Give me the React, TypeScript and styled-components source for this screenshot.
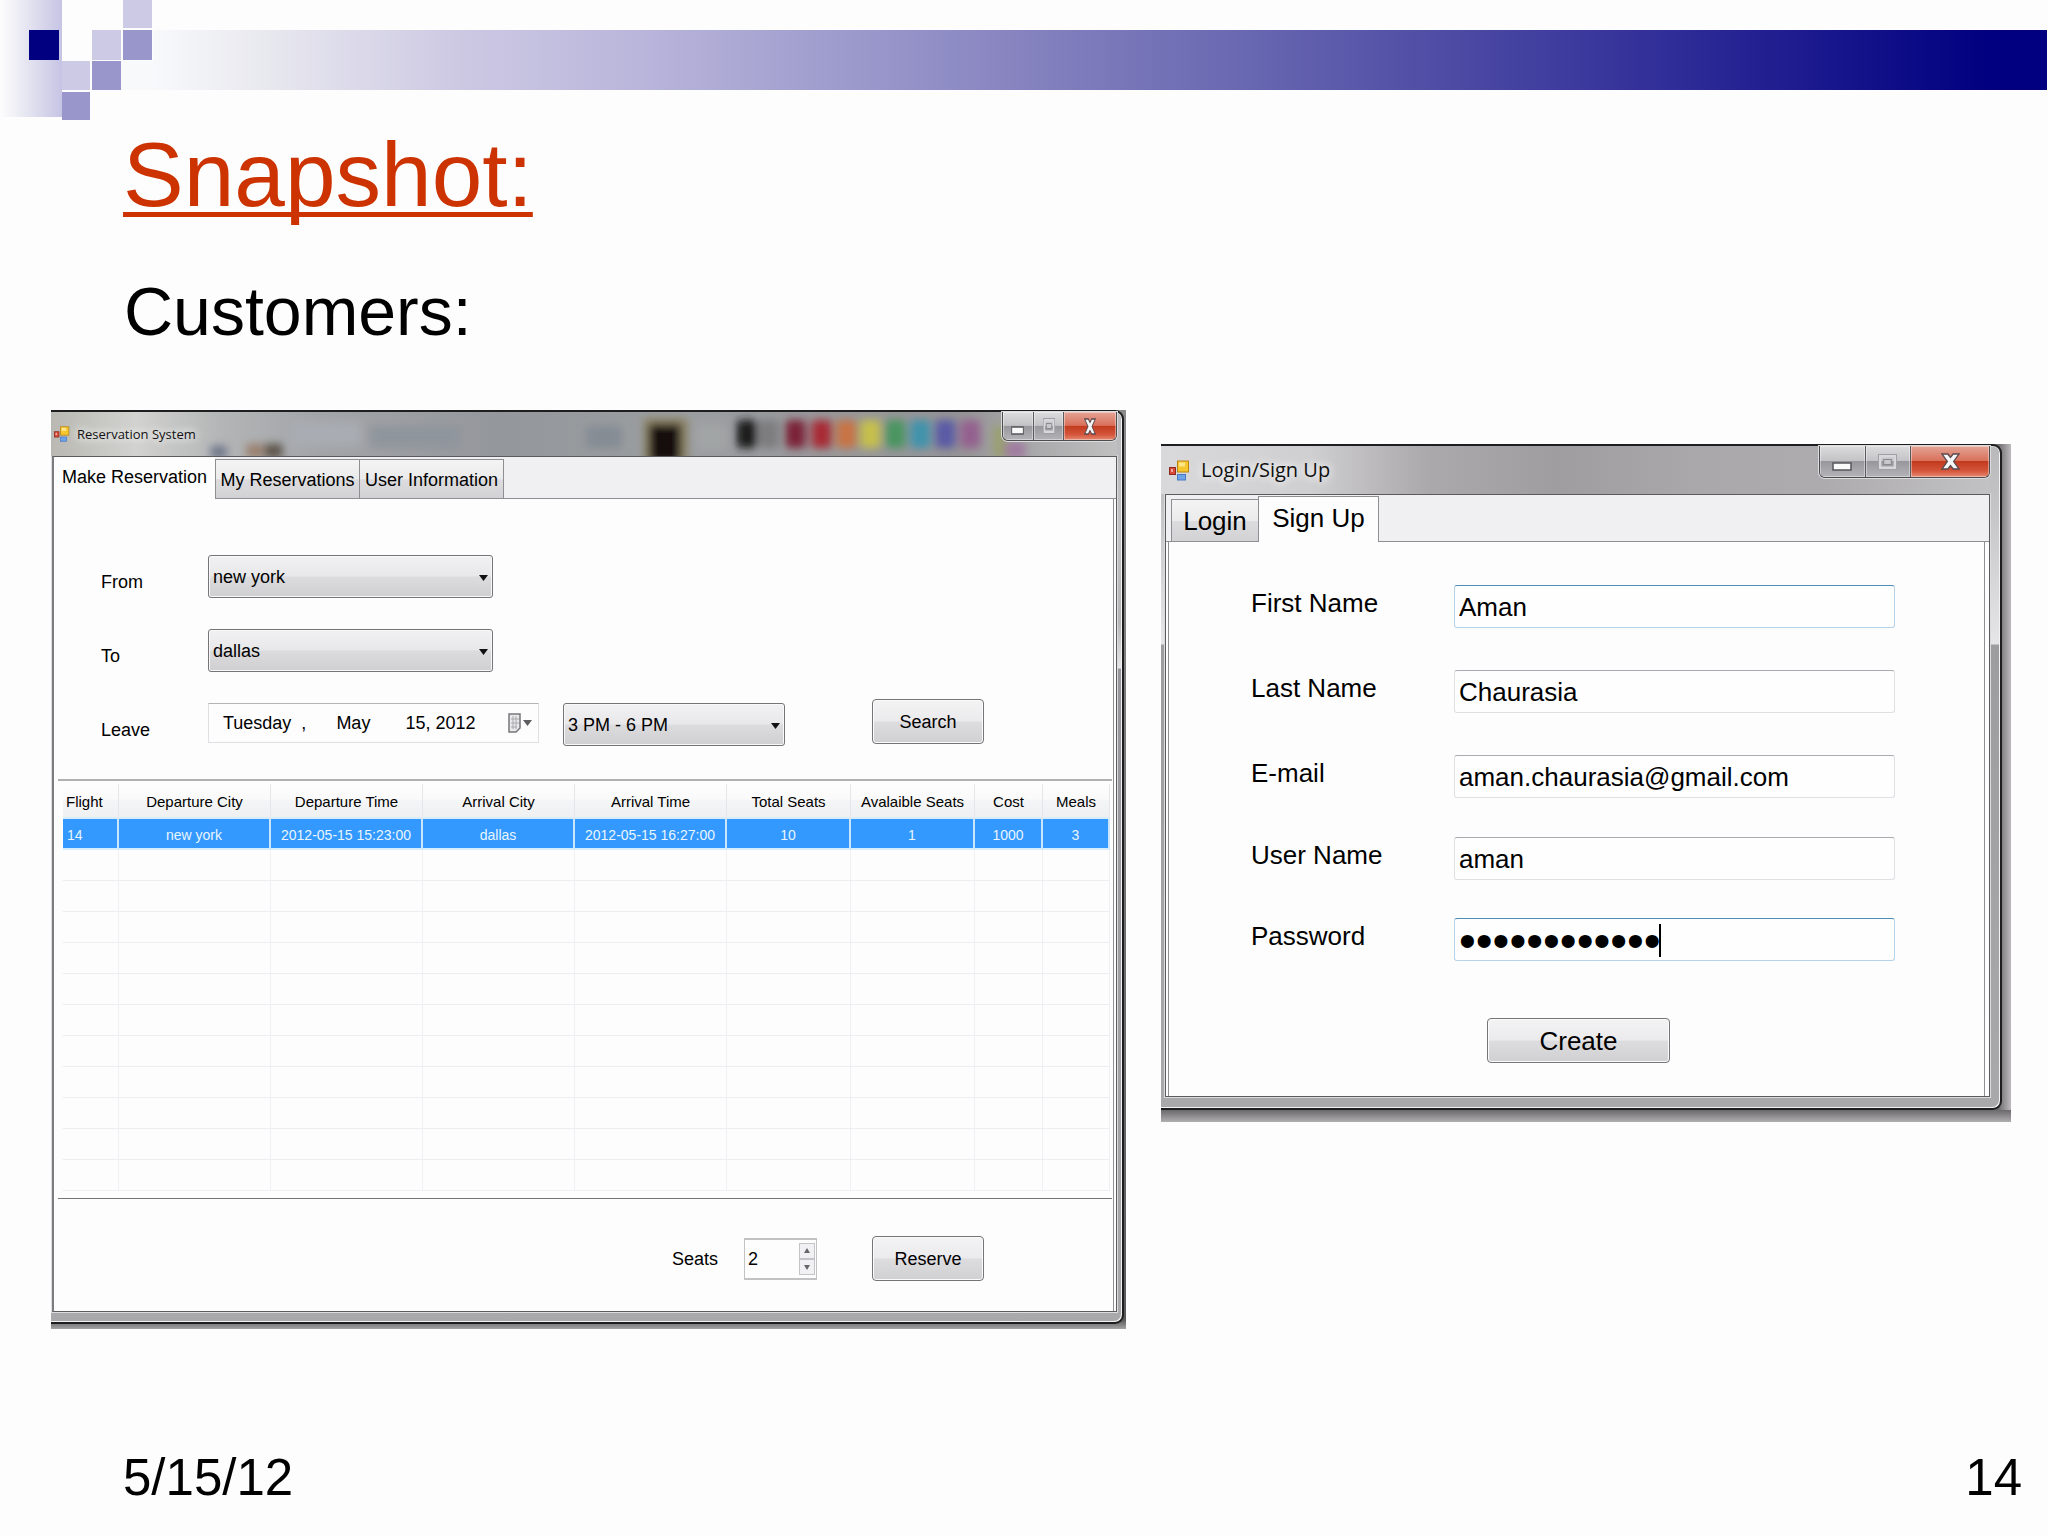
import React, { useState } from "react";
import styled, { createGlobalStyle, css } from "styled-components";

const sans = `"Liberation Sans", Arial, sans-serif`;
const caption = `"Open Sans", "Noto Sans", sans-serif`;

const GlobalStyle = createGlobalStyle`
  *, *::before, *::after { box-sizing: border-box; }
  body { margin: 0; background: #fdfdfd; color: #000; font-family: ${sans}; }
  button, input, select { font: inherit; color: inherit; margin: 0; }
`;

/* ---------- slide ---------- */

const Slide = styled.main`
  display: flex;
  flex-direction: column;
  min-height: 100vh;
`;

const Banner = styled.header`
  display: flex;
  align-items: flex-start;
  height: 120px;
  padding-right: 1px;
`;

const BannerBar = styled.div`
  flex: 1;
  height: 60px;
  margin-top: 30px;
  background: linear-gradient(
    90deg,
    #f8f9fb 0%,
    #e8e8ef 6%,
    #cdc9e3 16%,
    #bbb7dc 25%,
    #9e9ccd 36%,
    #8380be 47%,
    #6a69b2 57%,
    #4e4ca4 68%,
    #35339a 78%,
    #1a188d 88%,
    #000080 97%
  );
`;

const Heading = styled.h1`
  margin: 3px 0 0;
  padding-left: 123px;
  font-size: 91px;
  line-height: 104px;
  font-weight: 400;
  color: #cc3300;
  text-decoration: underline;
  text-decoration-thickness: 5px;
  text-underline-offset: 6px;
  text-decoration-skip-ink: none;
`;

const Subheading = styled.h2`
  margin: 45px 0 0;
  padding-left: 124px;
  font-size: 68px;
  line-height: 78px;
  font-weight: 400;
`;

const Snapshots = styled.div`
  display: grid;
  grid-template-columns: minmax(0, 1075fr) minmax(0, 850fr);
  gap: 35px;
  align-items: start;
  margin-top: 60px;
  padding: 0 37px 0 51px;
`;

const SlideFooter = styled.footer`
  display: flex;
  justify-content: space-between;
  margin-top: auto;
  padding: 0 26px 29px 123px;
  font-size: 51px;
  line-height: 58px;
`;

/* ---------- window chrome ---------- */

const Shadow = styled.section<{ $compact?: boolean }>`
  padding: ${(p) => (p.$compact ? "0 2px 5px 0" : "0 9px 12px 0")};
  margin-top: ${(p) => (p.$compact ? "0" : "34px")};
  background: ${(p) =>
    p.$compact
      ? "linear-gradient(180deg, #8a8a8a 0%, #5c5b5c 99%, #a5a4a5 100%)"
      : `linear-gradient(180deg, #6a686a, #b0aeb0) bottom / 100% 12px no-repeat,
         linear-gradient(90deg, #656366, #bcbabc) right / 14px 100% no-repeat, #777`};
`;

const Frame = styled.div<{ $compact?: boolean }>`
  border: 2px solid #1e1e20;
  border-left: 0;
  border-radius: 0 9px 9px 0;
  box-shadow: inset -1px -1px 0 #f2f2f2, inset 0 1px 0 #d8d8d8;
  ${(p) =>
    p.$compact
      ? css`
          padding: 0 5px 10px 1px;
          background: linear-gradient(180deg, #b9b8ba 0, #c0c1c3 120px, #b4b5b4 210px, #e6e6e8 256px, #97969a 257px, #a9a8ab 100%);
        `
      : css`
          padding: 0 10px 11px 4px;
          background: linear-gradient(180deg, #b9b8ba 0, #c4c4c6 60px, #e6e6e8 198px, #9d9c9f 199px, #a9a8ab 100%);
        `}
`;

const TitleBar = styled.div<{ $compact?: boolean }>`
  position: relative;
  display: flex;
  align-items: center;
  height: ${(p) => (p.$compact ? "44px" : "48px")};
  ${(p) =>
    p.$compact
      ? css`
          gap: 7px;
          padding-left: 2px;
        `
      : css`
          gap: 11px;
          margin-left: -4px;
          padding-left: 8px;
          background: linear-gradient(90deg, #d9d8da 0, #cfced0 150px, #aba9ac 32%, #9f9da0 48%, #aaa8ab 65%, #adabae 80%, #c2c1c3 100%);
        `}
`;

const Backdrop = styled.svg`
  position: absolute;
  left: -1px;
  top: 0;
  width: calc(100% + 1px);
  height: 100%;
`;

const TitleText = styled.span<{ $compact?: boolean }>`
  position: relative;
  flex: 1;
  font-family: ${caption};
  font-size: ${(p) => (p.$compact ? "13px" : "20px")};
  line-height: 26px;
  color: #111;
  text-shadow: 0 0 8px #fff, 0 0 12px #fff;
`;

const IconHolder = styled.span`
  position: relative;
  display: flex;
`;

const Controls = styled.div<{ $compact?: boolean }>`
  position: relative;
  display: flex;
  align-self: flex-start;
  height: ${(p) => (p.$compact ? "29px" : "32px")};
  width: ${(p) => (p.$compact ? "115px" : "171px")};
  border: 1px solid #4c4c50;
  border-top: 0;
  border-radius: 0 0 6px 6px;
  overflow: hidden;
  box-shadow: 0 0 0 1px #dcdcdc;
`;

const ControlButton = styled.button<{ $close?: boolean }>`
  display: flex;
  align-items: center;
  justify-content: center;
  flex: ${(p) => (p.$close ? "80 1 0" : "46 1 0")};
  padding: 0;
  border: 0;
  border-right: ${(p) => (p.$close ? "0" : "1px solid #5a5a5e")};
  background: ${(p) =>
    p.$close
      ? "linear-gradient(180deg, #e4a496 0, #d9705a 48%, #c23a1e 50%, #d4553a 80%, #e58a72 100%)"
      : "linear-gradient(180deg, #dcdcde 0, #c3c3c6 48%, #98989c 50%, #b4b4b8 100%)"};
  box-shadow: inset 0 0 0 1px rgba(255, 255, 255, 0.4);
`;

const Client = styled.div<{ $compact?: boolean }>`
  border: 1px solid #5b5a5d;
  border-left: ${(p) => (p.$compact ? "2px solid #7c7b7e" : "1px solid #5b5a5d")};
  background: #fdfdfd;
  box-shadow: 0 0 0 1px #dcdcde;
`;

const TabStrip = styled.div<{ $compact?: boolean }>`
  display: flex;
  align-items: flex-end;
  height: ${(p) => (p.$compact ? "42px" : "47px")};
  padding-left: ${(p) => (p.$compact ? "0" : "5px")};
  border-bottom: 1px solid #8f8e92;
  background: #f0eff2;
`;

const Tab = styled.button<{ $selected?: boolean; $compact?: boolean }>`
  font-size: ${(p) => (p.$compact ? "18px" : "26px")};
  line-height: 30px;
  white-space: nowrap;
  border: 1px solid #8f8e92;
  border-bottom: 0;
  ${(p) =>
    p.$selected
      ? css`
          width: ${p.$compact ? "161px" : "121px"};
          height: ${p.$compact ? "42px" : "46px"};
          margin-bottom: -1px;
          padding: 0 0 4px;
          background: #fdfdfd;
          ${p.$compact && "border-color: #fdfdfd;"}
        `
      : css`
          width: ${p.$compact ? "145px" : "88px"};
          height: ${p.$compact ? "39px" : "42px"};
          margin-right: -1px;
          padding: ${p.$compact ? "2px" : "0"} 0 0;
          background: linear-gradient(180deg, #f4f4f4 0, #ebebec 50%, #dcdcde 52%, #d2d2d5 100%);
        `}
`;

const PushButton = styled.button`
  border: 1px solid #757478;
  border-radius: 4px;
  padding: 0;
  background: linear-gradient(180deg, #f3f3f4 0, #ebeaec 49%, #dddcdf 51%, #d0cfd2 100%);
  box-shadow: inset 0 0 0 1px #fbfbfb;
`;

/* ---------- reservation window ---------- */

const ReservationPage = styled.div`
  margin-right: 2px;
  border-right: 1px solid #8f8e92;
  font-size: 18px;
  line-height: 30px;
`;

const SearchForm = styled.form`
  display: grid;
  grid-template-columns: 107px 1fr;
  row-gap: 31px;
  padding: 56px 129px 33px 47px;
`;

const FormLabel = styled.label`
  height: 43px;
  padding-top: 12px;
`;

const FormLine = styled.div`
  display: flex;
  align-items: flex-start;
`;

const ComboBox = styled.div<{ $short?: boolean }>`
  position: relative;
  width: ${(p) => (p.$short ? "222px" : "285px")};
  margin-left: ${(p) => (p.$short ? "24px" : "0")};
`;

const Select = styled.select`
  display: block;
  appearance: none;
  width: 100%;
  height: 43px;
  padding: 0 24px 0 4px;
  border: 1px solid #757478;
  border-radius: 3px;
  background: linear-gradient(180deg, #f1f1f2 0, #e8e7e9 49%, #dcdbde 51%, #cfced1 100%);
  box-shadow: inset 0 0 0 1px #f8f8f8;
`;

const ComboArrow = styled.svg`
  position: absolute;
  right: 5px;
  top: 19px;
  pointer-events: none;
`;

const DateBox = styled.div`
  display: flex;
  align-items: center;
  width: 331px;
  height: 40px;
  padding-right: 6px;
  border: 1px solid #e0dfe3;
  border-top-color: #b4b3b8;
`;

const DateInput = styled.input`
  flex: 1;
  min-width: 0;
  padding: 0 0 0 14px;
  border: 0;
  background: transparent;
  outline: 0;
`;

const CalendarButton = styled.button`
  display: flex;
  padding: 0;
  border: 0;
  background: none;
`;

const ActionButton = styled(PushButton)`
  width: 112px;
  height: 45px;
`;

const SearchButton = styled(ActionButton)`
  margin: -4px 0 0 auto;
`;

const GridPanel = styled.div`
  margin: 0 1px 0 4px;
  padding: 3px 2px 7px 5px;
  border-top: 2px solid #b0afb2;
  border-bottom: 1px solid #757478;
`;

const FlightTable = styled.table`
  width: 100%;
  table-layout: fixed;
  border-collapse: separate;
  border-spacing: 0;
  font-size: 14px;
  line-height: 24px;
`;

const HeadCell = styled.th`
  height: 35px;
  padding: 3px 0 0;
  font-size: 15px;
  font-weight: 400;
  text-align: center;
  white-space: nowrap;
  border-right: 1px solid #e6e6ea;
  border-bottom: 2px solid #d9ecf7;
  background: linear-gradient(180deg, #fdfdfd 0, #fafafb 45%, #f4f5f6 50%, #eff0f2 100%);
  &:first-child { text-align: left; padding-left: 3px; }
`;

const Cell = styled.td<{ $selected?: boolean }>`
  height: 31px;
  padding: 0;
  text-align: center;
  white-space: nowrap;
  border-right: 1px solid #f1eff4;
  border-bottom: 1px solid #efedf2;
  ${(p) =>
    p.$selected &&
    css`
      padding-top: 3px;
      color: #e8f5ff;
      background: #3399ff;
      border-right: 2px solid #cbe6fb;
      border-bottom: 2px solid #d6eefc;
      &:first-child { text-align: left; padding-left: 4px; }
    `}
`;

const BookingRow = styled.form`
  display: flex;
  align-items: center;
  justify-content: flex-end;
  padding: 37px 129px 30px 0;
`;

const Spinner = styled.div`
  display: flex;
  width: 73px;
  height: 42px;
  margin: 0 55px 0 26px;
  padding: 3px 1px 3px 3px;
  border: 1px solid #c2c1c4;
  border-width: 2px 1px;
`;

const SpinnerInput = styled.input`
  flex: 1;
  min-width: 0;
  padding: 0;
  border: 0;
  outline: 0;
  background: none;
  appearance: textfield;
  &::-webkit-inner-spin-button { appearance: none; display: none; }
`;

const SpinnerButtons = styled.div`
  display: flex;
  flex-direction: column;
  width: 16px;
`;

const StepButton = styled.button`
  flex: 1;
  display: flex;
  align-items: center;
  justify-content: center;
  padding: 0;
  border: 1px solid #c4c3c7;
  background: #f1f1f3;
`;

/* ---------- sign-up window ---------- */

const SignUpPage = styled.form`
  margin: 0 4px 0 2px;
  padding: 43px 89px 33px 82px;
  border: 1px solid #8f8e92;
  border-width: 0 1px;
  font-size: 26px;
  line-height: 36px;
`;

const Fields = styled.div`
  display: grid;
  grid-template-columns: 203px 1fr;
  grid-template-rows: 85px 85px 82px 81px 43px;
  align-items: start;
`;

const FieldBox = styled.div`
  position: relative;
`;

const TextBox = styled.input<{ $hot?: boolean; $masked?: boolean }>`
  display: block;
  width: 100%;
  height: 43px;
  padding: 2px 4px 0;
  border: 1px solid ${(p) => (p.$hot ? "#b5d3ea" : "#e0dfe4")};
  border-top-color: ${(p) => (p.$hot ? "#4f8db8" : "#abaab0")};
  border-radius: 3px;
  background: #fefefe;
  outline: 0;
  ${(p) =>
    p.$masked &&
    css`
      font-size: 48px;
      line-height: 36px;
    `}
`;

const Caret = styled.span`
  position: absolute;
  left: 205px;
  top: 6px;
  width: 2px;
  height: 33px;
  background: #000;
`;

const CreateButton = styled(PushButton)`
  display: block;
  width: 183px;
  height: 45px;
  margin: 57px 0 0 236px;
`;

/* ---------- drawings ---------- */

const Squares = () => (
  <svg width="153" height="120" viewBox="0 0 153 120" aria-hidden="true">
    <defs>
      <linearGradient id="fade" x1="0" x2="1" y1="0" y2="0">
        <stop offset="0" stopColor="#fdfdfd" />
        <stop offset="0.3" stopColor="#ededf5" />
        <stop offset="1" stopColor="#c6c4e4" />
      </linearGradient>
    </defs>
    <rect width="62" height="117" fill="url(#fade)" />
    <rect x="29" y="30" width="30" height="30" fill="#000080" />
    <rect x="120" y="61" width="33" height="29" fill="#f8f9fb" />
    <rect x="123" y="0" width="29" height="28" fill="#cdcae6" />
    <rect x="92" y="30" width="29" height="30" fill="#cdcae6" />
    <rect x="123" y="30" width="29" height="30" fill="#9896ca" />
    <rect x="62" y="61" width="28" height="29" fill="#cdcae6" />
    <rect x="92" y="61" width="29" height="29" fill="#9896ca" />
    <rect x="62" y="92" width="28" height="28" fill="#9896ca" />
  </svg>
);

const FormIcon = ({ size }: { size: number }) => (
  <svg width={size} height={size} viewBox="0 0 21 21" aria-hidden="true">
    <rect x="0.5" y="7.5" width="6" height="7" fill="#d9493a" stroke="#8e2a20" />
    <rect x="2" y="9" width="2" height="3" fill="#f2a79d" />
    <rect x="8.5" y="1" width="11" height="11" fill="#f6c62f" stroke="#b98512" />
    <rect x="10" y="2.5" width="6" height="4" fill="#fde58b" />
    <rect x="8.5" y="14.5" width="8" height="5.5" fill="#6ea3ea" stroke="#4a79c4" />
  </svg>
);

const MinimizeGlyph = ({ w }: { w: number }) => (
  <svg width={w} height="20" viewBox="0 0 20 20" preserveAspectRatio="none" aria-hidden="true">
    <rect x="1" y="11" width="18" height="7" fill="#fafafa" stroke="#55565c" strokeWidth="1.5" />
  </svg>
);

const MaximizeGlyph = ({ w }: { w: number }) => (
  <svg width={w} height="16" viewBox="0 0 20 16" preserveAspectRatio="none" aria-hidden="true">
    <rect x="2" y="2" width="16" height="12" fill="none" stroke="#d8d8da" strokeWidth="3" />
    <rect x="0.5" y="0.5" width="19" height="15" fill="none" stroke="#a0a0a4" />
    <rect x="6" y="5.5" width="8" height="5" fill="#c8c8cb" stroke="#88888c" />
  </svg>
);

const CloseGlyph = ({ w }: { w: number }) => (
  <svg width={w} height="17" viewBox="0 0 18 17" preserveAspectRatio="none" aria-hidden="true">
    <path
      d="M1 1h5.5L9 4.5 11.5 1H17l-5 7.5 5 7.5h-5.5L9 12.5 6.5 16H1l5-7.5z"
      fill="#f7f7f7"
      stroke="#5b4a50"
      strokeWidth="1.3"
    />
  </svg>
);

const swatches: [number, string][] = [
  [697, "#1d1c1f"],
  [719, "#7d7b7e"],
  [746, "#7c2238"],
  [772, "#a82c34"],
  [797, "#c87344"],
  [821, "#c6c04c"],
  [846, "#4a9560"],
  [871, "#3f93ac"],
  [896, "#5a5aa6"],
  [921, "#94608f"],
];

const GlassBackdrop = () => (
  <Backdrop viewBox="0 0 1068 44" preserveAspectRatio="none" aria-hidden="true">
    <defs>
      <linearGradient id="glass" x1="0" x2="1" y1="0" y2="0">
        <stop offset="0" stopColor="#b9b8b2" />
        <stop offset="0.08" stopColor="#d2d3d0" />
        <stop offset="0.16" stopColor="#b3b5b6" />
        <stop offset="0.25" stopColor="#a2a4a8" />
        <stop offset="0.42" stopColor="#94979b" />
        <stop offset="0.6" stopColor="#9b9ea1" />
        <stop offset="0.85" stopColor="#949395" />
        <stop offset="1" stopColor="#c0c0c1" />
      </linearGradient>
      <filter id="soft" x="-10%" y="-60%" width="120%" height="220%">
        <feGaussianBlur stdDeviation="4" />
      </filter>
    </defs>
    <rect width="1068" height="44" fill="url(#glass)" />
    <g filter="url(#soft)">
      <rect x="160" y="34" width="16" height="12" fill="#6d7388" />
      <rect x="196" y="32" width="16" height="14" fill="#9a7f6c" />
      <rect x="214" y="32" width="18" height="14" fill="#5b5349" />
      <rect x="240" y="10" width="70" height="24" fill="#a9adb3" />
      <rect x="320" y="14" width="90" height="22" fill="#8f959c" />
      <rect x="536" y="14" width="36" height="22" fill="#858c94" />
      <rect x="594" y="6" width="44" height="44" fill="#8e8465" />
      <rect x="599" y="12" width="32" height="38" fill="#141110" />
      <rect x="647" y="12" width="30" height="26" fill="#a2a5a5" />
      {swatches.map(([x, fill]) => (
        <rect key={x} x={x - 10} y="8" width="20" height="28" rx="4" fill={fill} />
      ))}
      <rect x="944" y="14" width="14" height="32" fill="#9aa070" />
      <rect x="956" y="30" width="20" height="16" fill="#a07aa0" />
    </g>
  </Backdrop>
);

const DownArrow = () => (
  <ComboArrow width="9" height="8" viewBox="0 0 9 8" aria-hidden="true">
    <path d="M0 1h9L4.5 7z" fill="#111" />
  </ComboArrow>
);

/* ---------- composed parts ---------- */

const WindowControls = ({ compact }: { compact?: boolean }) => (
  <Controls $compact={compact}>
    <ControlButton type="button" aria-label="Minimize">
      <MinimizeGlyph w={compact ? 13 : 20} />
    </ControlButton>
    <ControlButton type="button" aria-label="Maximize">
      <MaximizeGlyph w={compact ? 12 : 19} />
    </ControlButton>
    <ControlButton type="button" aria-label="Close" $close>
      <CloseGlyph w={compact ? 12 : 19} />
    </ControlButton>
  </Controls>
);

type ComboProps = { id: string; options: string[]; short?: boolean; label?: string };

const Combo = ({ id, options, short, label }: ComboProps) => (
  <ComboBox $short={short}>
    <Select id={id} aria-label={label} defaultValue={options[0]}>
      {options.map((o) => (
        <option key={o}>{o}</option>
      ))}
    </Select>
    <DownArrow />
  </ComboBox>
);

const columns: [string, number][] = [
  ["Flight", 56],
  ["Departure City", 152],
  ["Departure Time", 152],
  ["Arrival City", 152],
  ["Arrival Time", 152],
  ["Total Seats", 124],
  ["Avalaible Seats", 124],
  ["Cost", 68],
  ["Meals", 67],
];

const flight = ["14", "new york", "2012-05-15 15:23:00", "dallas", "2012-05-15 16:27:00", "10", "1", "1000", "3"];
const emptyRows = Array.from({ length: 11 }, (_, i) => i);

const Col = styled.col<{ $w: number }>`
  width: ${(p) => p.$w}px;
`;

const ReservationWindow = () => {
  const [seats, setSeats] = useState(2);
  return (
    <Shadow $compact aria-label="Reservation System">
      <Frame $compact>
        <TitleBar $compact>
          <GlassBackdrop />
          <IconHolder>
            <FormIcon size={16} />
          </IconHolder>
          <TitleText $compact>Reservation System</TitleText>
          <WindowControls compact />
        </TitleBar>
        <Client $compact>
          <TabStrip $compact role="tablist">
            <Tab type="button" role="tab" aria-selected $selected $compact>Make Reservation</Tab>
            <Tab type="button" role="tab" $compact>My Reservations</Tab>
            <Tab type="button" role="tab" $compact>User Information</Tab>
          </TabStrip>
          <ReservationPage>
            <SearchForm onSubmit={(e) => e.preventDefault()}>
              <FormLabel htmlFor="from">From</FormLabel>
              <Combo id="from" options={["new york", "dallas"]} />
              <FormLabel htmlFor="to">To</FormLabel>
              <Combo id="to" options={["dallas", "new york"]} />
              <FormLabel htmlFor="leave">Leave</FormLabel>
              <FormLine>
                <DateBox>
                  <DateInput id="leave" defaultValue={"Tuesday  ,      May       15, 2012"} />
                  <CalendarButton type="button" aria-label="Open calendar">
                    <svg width="24" height="20" viewBox="0 0 24 20" aria-hidden="true">
                      <path d="M1 1h11v14l-4 4H1z" fill="#e9e9eb" stroke="#77767a" strokeWidth="1.5" />
                      <path d="M3 6h8M3 10h8M3 14h6M5 3v13M8 3v13" stroke="#a9a8ac" fill="none" />
                      <path d="M15 7h9l-4.500 6z" fill="#5e5d61" />
                    </svg>
                  </CalendarButton>
                </DateBox>
                <Combo id="time" label="Time" options={["3 PM - 6 PM", "6 PM - 9 PM"]} short />
                <SearchButton type="submit">Search</SearchButton>
              </FormLine>
            </SearchForm>
            <GridPanel>
              <FlightTable>
                <colgroup>
                  {columns.map(([name, w]) => (
                    <Col key={name} $w={w} />
                  ))}
                </colgroup>
                <thead>
                  <tr>
                    {columns.map(([name]) => (
                      <HeadCell key={name} scope="col">{name}</HeadCell>
                    ))}
                  </tr>
                </thead>
                <tbody>
                  <tr>
                    {flight.map((value, i) => (
                      <Cell key={i} $selected>{value}</Cell>
                    ))}
                  </tr>
                  {emptyRows.map((r) => (
                    <tr key={r}>
                      {columns.map(([name]) => (
                        <Cell key={name} />
                      ))}
                    </tr>
                  ))}
                </tbody>
              </FlightTable>
            </GridPanel>
            <BookingRow onSubmit={(e) => e.preventDefault()}>
              <label htmlFor="seats">Seats</label>
              <Spinner>
                <SpinnerInput
                  id="seats"
                  type="number"
                  value={seats}
                  onChange={(e) => setSeats(Number(e.target.value))}
                />
                <SpinnerButtons>
                  <StepButton type="button" aria-label="More seats" onClick={() => setSeats(seats + 1)}>
                    <svg width="6" height="6" viewBox="0 0 6 6"><path d="M0 5h6L3 0z" fill="#66656a" /></svg>
                  </StepButton>
                  <StepButton type="button" aria-label="Fewer seats" onClick={() => setSeats(Math.max(1, seats - 1))}>
                    <svg width="6" height="6" viewBox="0 0 6 6"><path d="M0 1h6L3 6z" fill="#66656a" /></svg>
                  </StepButton>
                </SpinnerButtons>
              </Spinner>
              <ActionButton type="submit">Reserve</ActionButton>
            </BookingRow>
          </ReservationPage>
        </Client>
      </Frame>
    </Shadow>
  );
};

type Field = { id: string; label: string; value: string; type?: string; hot?: boolean };

const fields: Field[] = [
  { id: "first", label: "First Name", value: "Aman", hot: true },
  { id: "last", label: "Last Name", value: "Chaurasia" },
  { id: "email", label: "E-mail", value: "aman.chaurasia@gmail.com" },
  { id: "user", label: "User Name", value: "aman" },
  { id: "password", label: "Password", value: "reservations", type: "password", hot: true },
];

const SignUpWindow = () => (
  <Shadow aria-label="Login/Sign Up">
    <Frame>
      <TitleBar>
        <IconHolder>
          <FormIcon size={21} />
        </IconHolder>
        <TitleText>Login/Sign Up</TitleText>
        <WindowControls />
      </TitleBar>
      <Client>
        <TabStrip role="tablist">
          <Tab type="button" role="tab">Login</Tab>
          <Tab type="button" role="tab" aria-selected $selected>Sign Up</Tab>
        </TabStrip>
        <SignUpPage onSubmit={(e) => e.preventDefault()}>
          <Fields>
            {fields.map((f) => (
              <React.Fragment key={f.id}>
                <label htmlFor={f.id}>{f.label}</label>
                <FieldBox>
                  <TextBox
                    id={f.id}
                    type={f.type ?? "text"}
                    defaultValue={f.value}
                    $hot={f.hot}
                    $masked={f.type === "password"}
                  />
                  {f.type === "password" && <Caret />}
                </FieldBox>
              </React.Fragment>
            ))}
          </Fields>
          <CreateButton type="submit">Create</CreateButton>
        </SignUpPage>
      </Client>
    </Frame>
  </Shadow>
);

export default function App() {
  return (
    <>
      <GlobalStyle />
      <Slide>
        <Banner>
          <Squares />
          <BannerBar />
        </Banner>
        <Heading>Snapshot:</Heading>
        <Subheading>Customers:</Subheading>
        <Snapshots>
          <ReservationWindow />
          <SignUpWindow />
        </Snapshots>
        <SlideFooter>
          <span>5/15/12</span>
          <span>14</span>
        </SlideFooter>
      </Slide>
    </>
  );
}
